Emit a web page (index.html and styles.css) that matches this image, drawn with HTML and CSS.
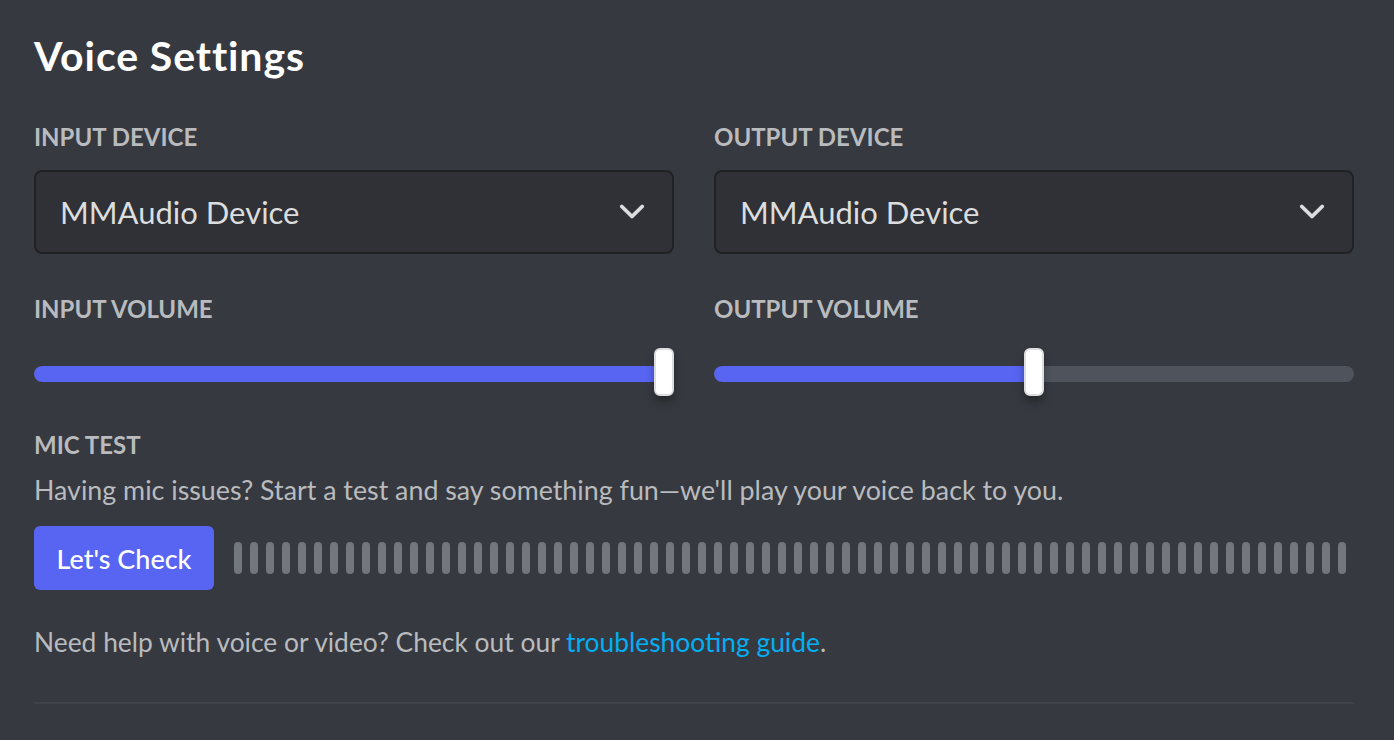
FILE: index.html
```html
<!DOCTYPE html>
<html lang="en">
<head>
<meta charset="utf-8">
<title>Voice Settings</title>
<link rel="stylesheet" href="styles.css">
</head>
<body>
<div class="page">
  <h1 class="title">Voice Settings</h1>
  <div class="grid">
    <div class="field">
      <h5 class="label">Input Device</h5>
      <div class="select">
        <span class="select-value">MMAudio Device</span>
        <svg class="chevron" width="24" height="24" viewBox="0 0 24 24"><path d="M1.8 6.5 L12 16.5 L22.2 6.5" fill="none" stroke="currentColor" stroke-width="3.8" stroke-linecap="round" stroke-linejoin="round"/></svg>
      </div>
    </div>
    <div class="field">
      <h5 class="label">Output Device</h5>
      <div class="select">
        <span class="select-value">MMAudio Device</span>
        <svg class="chevron" width="24" height="24" viewBox="0 0 24 24"><path d="M1.8 6.5 L12 16.5 L22.2 6.5" fill="none" stroke="currentColor" stroke-width="3.8" stroke-linecap="round" stroke-linejoin="round"/></svg>
      </div>
    </div>
    <div class="field field-volume">
      <h5 class="label">Input Volume</h5>
      <div class="slider">
        <div class="track"><div class="fill" style="width:100%"></div></div>
        <div class="knob" style="left:calc(1 * (100% - 20px))"></div>
      </div>
    </div>
    <div class="field field-volume">
      <h5 class="label">Output Volume</h5>
      <div class="slider">
        <div class="track"><div class="fill" style="width:50%"></div></div>
        <div class="knob" style="left:calc(0.5 * (100% - 20px))"></div>
      </div>
    </div>
  </div>
  <section class="mic">
    <h5 class="label">Mic Test</h5>
    <p class="desc">Having mic issues? Start a test and say something fun—we'll play your voice back to you.</p>
    <div class="mic-row">
      <button class="btn">Let's Check</button>
      <div class="bars">
        <span></span><span></span><span></span><span></span><span></span><span></span><span></span><span></span><span></span><span></span>
        <span></span><span></span><span></span><span></span><span></span><span></span><span></span><span></span><span></span><span></span>
        <span></span><span></span><span></span><span></span><span></span><span></span><span></span><span></span><span></span><span></span>
        <span></span><span></span><span></span><span></span><span></span><span></span><span></span><span></span><span></span><span></span>
        <span></span><span></span><span></span><span></span><span></span><span></span><span></span><span></span><span></span><span></span>
        <span></span><span></span><span></span><span></span><span></span><span></span><span></span><span></span><span></span><span></span>
        <span></span><span></span><span></span><span></span><span></span><span></span><span></span><span></span><span></span><span></span>
      </div>
    </div>
  </section>
  <p class="help">Need help with voice or video? Check out our <a class="link" href="#">troubleshooting guide</a>.</p>
  <div class="divider"></div>
</div>
</body>
</html>
```

FILE: styles.css
```css
html, body {
  margin: 0;
  padding: 0;
  background: #36393f;
  height: 100%;
}
body {
  font-family: Lato, "Noto Sans", sans-serif;
  color: #dcddde;
}
.page {
  padding: 32px 40px 0 34px;
}
.title {
  margin: 0;
  font-size: 41px;
  line-height: 48px;
  font-weight: 700;
  letter-spacing: 0.9px;
  color: #ffffff;
}
.grid {
  display: grid;
  grid-template-columns: 1fr 1fr;
  column-gap: 40px;
  margin-top: 41px;
}
.label {
  margin: 0;
  font-size: 24px;
  line-height: 32px;
  font-weight: 700;
  text-transform: uppercase;
  color: #b9bbbe;
}
.select {
  margin-top: 17px;
  height: 84px;
  box-sizing: border-box;
  border: 2px solid #202225;
  border-radius: 8px;
  background: #2f3136;
  display: flex;
  align-items: center;
  justify-content: space-between;
  padding: 0 28px 0 24px;
}
.select-value {
  font-size: 31px;
  color: #dcddde;
}
.chevron {
  color: #dcddde;
}
.field-volume {
  margin-top: 39px;
}
.slider {
  position: relative;
  height: 48px;
  box-sizing: border-box;
  padding-top: 18px;
  margin-top: 23px;
}
.track {
  height: 16px;
  border-radius: 8px;
  background: #4f545c;
  overflow: hidden;
}
.fill {
  height: 100%;
  background: #5865f2;
  border-radius: 8px;
}
.knob {
  position: absolute;
  top: 0;
  width: 20px;
  height: 48px;
  box-sizing: border-box;
  border: 2px solid #dcddde;
  border-radius: 6px;
  background: #ffffff;
  box-shadow: 0 6px 8px rgba(0, 0, 0, 0.3);
}
.mic {
  margin-top: 33px;
}
.desc {
  margin: 11px 0 0;
  font-size: 26.8px;
  line-height: 36px;
  color: #b9bbbe;
}
.mic-row {
  display: flex;
  align-items: center;
  margin-top: 18px;
}
.btn {
  width: 180px;
  height: 64px;
  border: none;
  border-radius: 6px;
  background: #5865f2;
  color: #ffffff;
  font-family: Lato, "Noto Sans", sans-serif;
  font-size: 27px;
  font-weight: 500;
  padding: 0;
  flex: none;
}
.bars {
  display: flex;
  gap: 8px;
  margin-left: 20px;
}
.bars span {
  width: 8px;
  height: 32px;
  border-radius: 4px;
  background: #72767d;
  flex: none;
}
.help {
  margin: 34px 0 0;
  font-size: 26.4px;
  line-height: 36px;
  color: #b9bbbe;
}
.link {
  color: #00aff4;
  text-decoration: none;
}
.divider {
  margin-top: 42px;
  height: 2px;
  background: #404349;
}
```
